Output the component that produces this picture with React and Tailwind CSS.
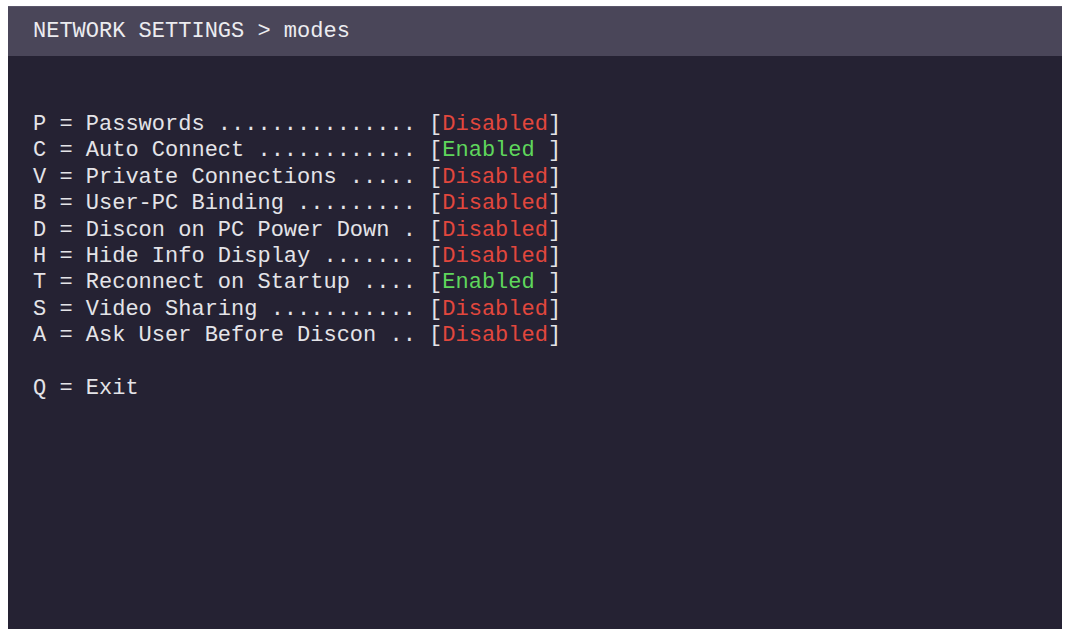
import React from 'react'

const modes = [
  { key: 'P', label: 'Passwords', dots: '...............', on: false },
  { key: 'C', label: 'Auto Connect', dots: '............', on: true },
  { key: 'V', label: 'Private Connections', dots: '.....', on: false },
  { key: 'B', label: 'User-PC Binding', dots: '.........', on: false },
  { key: 'D', label: 'Discon on PC Power Down', dots: '.', on: false },
  { key: 'H', label: 'Hide Info Display', dots: '.......', on: false },
  { key: 'T', label: 'Reconnect on Startup', dots: '....', on: true },
  { key: 'S', label: 'Video Sharing', dots: '...........', on: false },
  { key: 'A', label: 'Ask User Before Discon', dots: '..', on: false },
]

export default function App() {
  return (
    <div className="w-[1065px] h-[632px] bg-white pt-[6px] pl-[8px] pr-[3px] pb-[3px]">
      <div
        className="flex flex-col h-full bg-[#252233] text-[#e4e4e8] text-[22px] leading-[26.4px] whitespace-pre"
        style={{ fontFamily: '"Liberation Mono", "DejaVu Sans Mono", monospace' }}
      >
        {/* title bar */}
        <div className="h-[50px] flex items-center px-[25px] pt-[2px] bg-[#4a4659] border-t border-[#5a566a] text-[#ececf0]">
          NETWORK SETTINGS &gt; modes
        </div>

        <div className="pt-[56px] px-[25px]">
          {modes.map((m) => (
            <div key={m.key}>
              {m.key} = {m.label} {m.dots} [
              {m.on ? (
                <span className="text-[#5fd65c]">Enabled </span>
              ) : (
                <span className="text-[#e2473d]">Disabled</span>
              )}
              ]
            </div>
          ))}
          <div>&nbsp;</div>
          <div>Q = Exit</div>
        </div>
      </div>
    </div>
  )
}
